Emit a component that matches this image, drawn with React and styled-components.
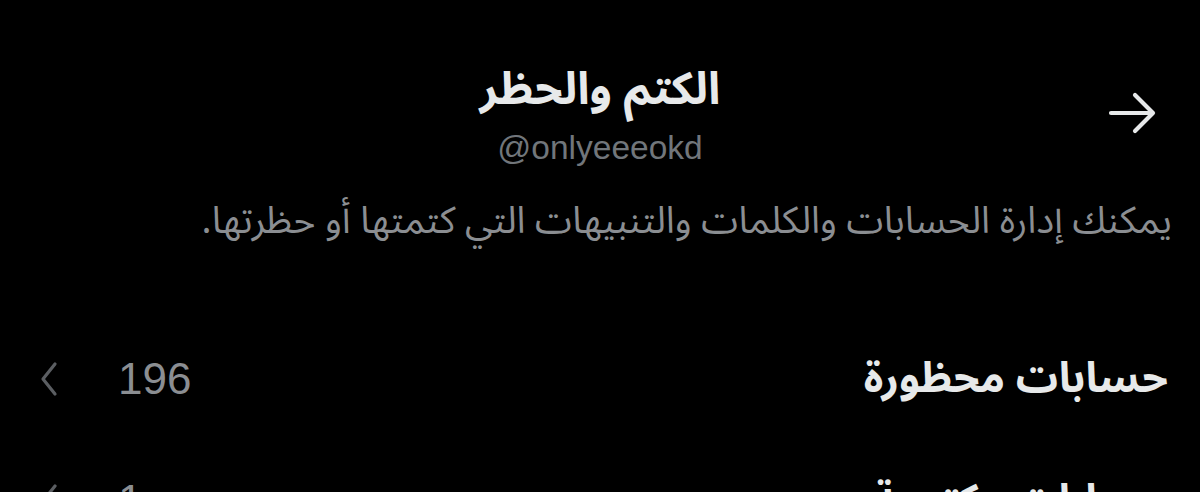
import React from 'react';
import styled, { createGlobalStyle } from 'styled-components';

const GlobalStyle = createGlobalStyle`
    html, body {
        margin: 0;
        padding: 0;
        background: #000;
    }

    body {
        font-family: "Noto Sans Arabic", "Noto Sans", "DejaVu Sans", sans-serif;
        color: #e7e9ea;
        overflow: hidden;
    }
`;

const Page = styled.div`
    direction: rtl;
    width: 1200px;
    height: 492px;
    overflow: hidden;
    background: #000;
`;

const Header = styled.header`
    display: grid;
    grid-template-columns: 120px 1fr 120px;
    align-items: center;
    padding-top: 60px;
`;

const BackButton = styled.button`
    display: flex;
    align-items: center;
    justify-content: flex-start;
    padding: 0 42px 0 0;
    margin-top: -4px;
    background: none;
    border: 0;
    color: #e7e9ea;
`;

const TitleBlock = styled.div`
    display: flex;
    flex-direction: column;
    align-items: center;
`;

const Title = styled.h1`
    margin: 0;
    font-size: 45px;
    font-weight: 700;
    line-height: 60px;
    color: #e7e9ea;
`;

const Handle = styled.span`
    direction: ltr;
    margin-top: 6px;
    font-family: "Liberation Sans", Arial, sans-serif;
    font-size: 33.5px;
    line-height: 44px;
    color: #71767b;
`;

const Description = styled.p`
    margin: 26px 28px 0 28px;
    font-size: 37.5px;
    line-height: 50px;
    color: #8b8e92;
    white-space: nowrap;
`;

const List = styled.ul`
    list-style: none;
    margin: 72px 0 0 0;
    padding: 0;
`;

const Row = styled.li`
    display: flex;
    align-items: center;
    justify-content: space-between;
    height: 122px;
    padding: 0 32px 0 38px;
`;

const RowLabel = styled.span`
    font-size: 42px;
    font-weight: 700;
    line-height: 60px;
    color: #e7e9ea;
`;

const RowMeta = styled.span`
    display: flex;
    align-items: center;
    gap: 58px;
    color: #8b8e92;
`;

const Count = styled.span`
    font-family: "Liberation Sans", Arial, sans-serif;
    font-size: 44px;
    line-height: 50px;
`;

const Chevron = () => (
    <svg width="22" height="36" viewBox="0 0 22 36" fill="none">
        <path d="M17 3L5 18l12 15" stroke="#5b5e62" strokeWidth="3.2" strokeLinecap="round" strokeLinejoin="round" />
    </svg>
);

const ArrowRight = () => (
    <svg width="50" height="44" viewBox="0 0 50 44" fill="none">
        <path d="M3 22h42M27 4l18 18-18 18" stroke="#e7e9ea" strokeWidth="4.2" strokeLinecap="round" strokeLinejoin="round" />
    </svg>
);

const rows = [
    { label: 'حسابات محظورة', count: 196 },
    { label: 'حسابات مكتومة', count: 1 },
];

const App = () => (
    <Page>
        <GlobalStyle />
        <Header>
            <BackButton type='button'>
                <ArrowRight />
            </BackButton>
            <TitleBlock>
                <Title>الكتم والحظر</Title>
                <Handle>@onlyeeeokd</Handle>
            </TitleBlock>
            <div />
        </Header>
        <Description>
            يمكنك إدارة الحسابات والكلمات والتنبيهات التي كتمتها أو حظرتها.
        </Description>
        <List>
            {rows.map((row) => (
                <Row key={row.label}>
                    <RowLabel>{row.label}</RowLabel>
                    <RowMeta>
                        <Count>{row.count}</Count>
                        <Chevron />
                    </RowMeta>
                </Row>
            ))}
        </List>
    </Page>
);

export default App;
